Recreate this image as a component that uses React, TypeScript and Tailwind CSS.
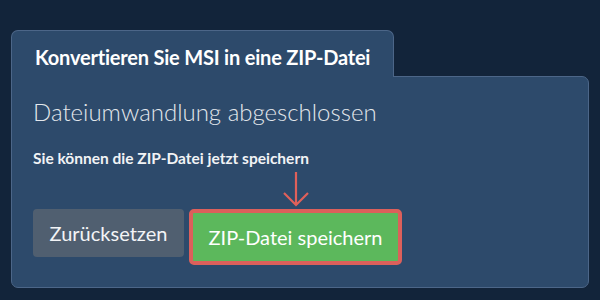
import React from "react";

export default function App() {
  return (
    <div className="w-[600px] h-[300px] bg-[#12243a] overflow-hidden" style={{ fontFamily: "Lato, 'Noto Sans', sans-serif" }}>
      <div className="pt-[30px] pl-[11px] w-[589px]">
        <div className="relative z-10 -mb-px w-[383px] h-[47px] bg-[#2d4a6b] border border-b-0 border-[#4c6688] rounded-t-[7px] pl-[23px] pt-[14px]">
          <div className="text-white font-bold text-[20px] leading-[24px] tracking-[-0.2px]">Konvertieren Sie MSI in eine ZIP-Datei</div>
        </div>
        <div className="h-[212px] bg-[#2d4a6b] border border-[#4c6688] rounded-b-[7px] rounded-tr-[7px] px-[21px] pt-[21px]">
          <div className="text-[#e3e7ec] text-[24px] font-light leading-[28px]">Dateiumwandlung abgeschlossen</div>
          <div className="mt-[22px] text-[#f1f3f5] text-[15.5px] font-bold leading-[20px]">Sie können die ZIP-Datei jetzt speichern</div>
          <div className="mt-[41px] flex items-start gap-[5px]">
            <button className="w-[151px] h-[48px] rounded-[4px] bg-[#505f70] text-[#f3f4f6] text-[20px] leading-none">Zurücksetzen</button>
            <div className="relative">
              <svg className="absolute left-1/2 -translate-x-1/2 -top-[38px]" width="28" height="36" viewBox="0 0 28 36" fill="none">
                <path d="M14 1 V34 M2 22 L14 34 L26 22" stroke="#e0605a" strokeWidth="2.2" />
              </svg>
              <button className="w-[213px] h-[56px] rounded-[5px] border-4 border-[#dc605b] bg-[#5cb85c] text-white text-[20px] leading-none">ZIP-Datei speichern</button>
            </div>
          </div>
        </div>
      </div>
    </div>
  );
}
